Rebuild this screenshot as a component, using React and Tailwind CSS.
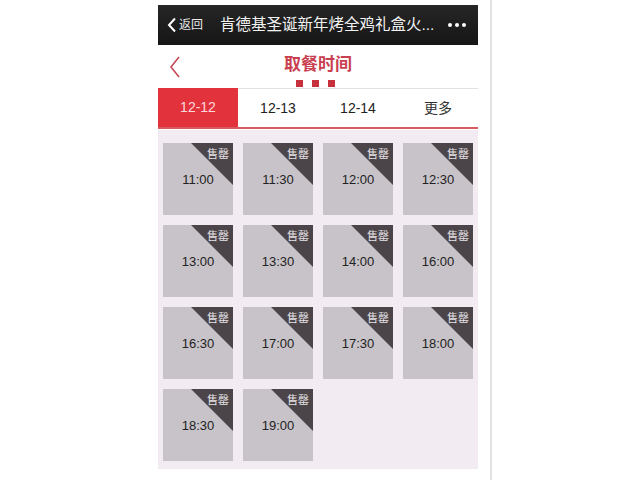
export default function App() {
  const times = ["11:00","11:30","12:00","12:30","13:00","13:30","14:00","16:00","16:30","17:00","17:30","18:00","18:30","19:00"];
  const font = { fontFamily: '"Liberation Sans", "Noto Sans CJK SC", sans-serif' };
  return (
    <div className="w-[640px] h-[480px] bg-white overflow-hidden flex" style={font}>
      <div className="ml-[158px] w-[320px] pt-[5px]">
        <div className="h-[40px] bg-gradient-to-b from-[#262626] to-[#161616] flex items-center text-white">
          <div className="flex items-center pl-[9px] w-[62px]">
            <svg width="10" height="16" viewBox="0 0 10 16"><path d="M8 1.5 L2 8 L8 14.5" stroke="white" strokeWidth="2" fill="none" /></svg>
            <span className="text-[12px] ml-[2px] text-[#e8e8e8]">返回</span>
          </div>
          <div className="text-[15.5px] text-[#f2f2f2] whitespace-nowrap">肯德基圣诞新年烤全鸡礼盒火...</div>
          <div className="ml-auto pr-[12px] flex gap-[3px]">
            <span className="w-[4px] h-[4px] rounded-full bg-white"></span>
            <span className="w-[4px] h-[4px] rounded-full bg-white"></span>
            <span className="w-[4px] h-[4px] rounded-full bg-white"></span>
          </div>
        </div>
        <div className="h-[43px] bg-white relative flex items-center justify-center">
          <svg className="absolute left-[11px] top-[11px]" width="12" height="22" viewBox="0 0 12 22"><path d="M10 1 L2 11 L10 21" stroke="#c44a5a" strokeWidth="1.6" fill="none" /></svg>
          <div className="text-[17px] font-bold text-[#c8404f] -mt-[3px]">取餐时间</div>
          <div className="absolute left-[138px] top-[35px] flex gap-[9px]">
            <span className="w-[7px] h-[7px] bg-[#c8303e]"></span>
            <span className="w-[7px] h-[7px] bg-[#c8303e]"></span>
            <span className="w-[7px] h-[7px] bg-[#c8303e]"></span>
          </div>
        </div>
        <div className="h-[41px] flex border-t border-[#e4e0e4] border-b-[2px] border-b-[#d85a62] bg-white text-[14px]">
          <div className="w-[80px] bg-[#e2323c] text-[#ffd8dc] flex items-center justify-center -mt-[1px]">12-12</div>
          <div className="w-[80px] flex items-center justify-center text-[#222]">12-13</div>
          <div className="w-[80px] flex items-center justify-center text-[#222]">12-14</div>
          <div className="w-[80px] flex items-center justify-center text-[#333]">更多</div>
        </div>
        <div className="mt-[1px] bg-[#f2ecf2] pt-[13px] pl-[5px] pr-[5px] pb-[6px] grid grid-cols-[repeat(4,70px)] gap-x-[10px] gap-y-[10px] h-[339px] content-start">
          {times.map((t) => (
            <div key={t} className="relative w-[70px] h-[72px] bg-[#c8c3c8] flex items-center justify-center overflow-hidden">
              <div className="absolute right-0 top-0 w-[42px] h-[42px] bg-[#4b4549] [clip-path:polygon(0_0,100%_0,100%_100%)]"></div>
              <span className="absolute right-[4px] top-[3px] text-[11px] text-[#e6e2e6]">售罄</span>
              <span className="relative text-[13px] text-[#222] mt-[2px]">{t}</span>
            </div>
          ))}
        </div>
      </div>
      <div className="ml-[12px] w-[2px] h-full bg-[#e2e2e2]"></div>
    </div>
  );
}
